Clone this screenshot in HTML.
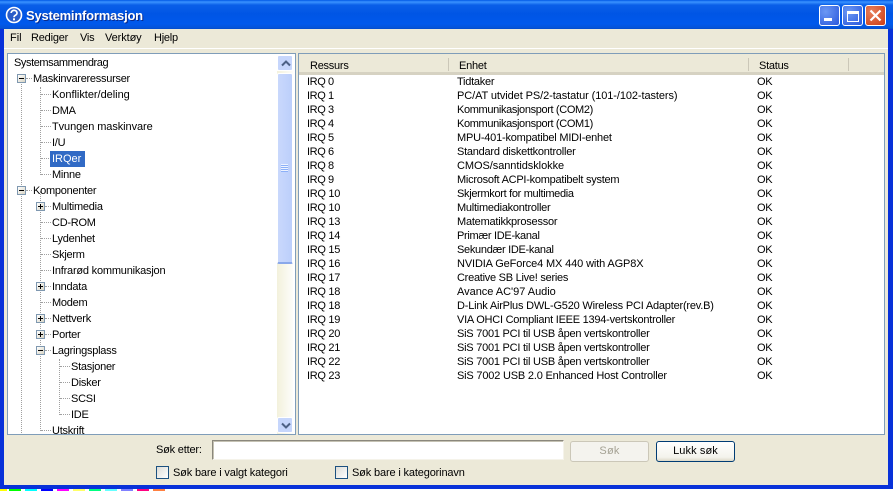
<!DOCTYPE html>
<html><head><meta charset="utf-8"><style>
html,body{margin:0;padding:0;width:893px;height:491px;overflow:hidden;background:#fff}
*{box-sizing:border-box}
#w{position:absolute;left:0;top:0;width:893px;height:491px;overflow:hidden;font:11px "Liberation Sans",sans-serif;color:#000;letter-spacing:-.25px}
.a{position:absolute;white-space:nowrap}
.t{position:absolute;white-space:nowrap;line-height:14px;height:14px}
.ln{position:absolute;border-color:#a0a0a0;border-style:dotted;border-width:0}
.pm{position:absolute;width:9px;height:9px;border:1px solid #7f98b0;background:linear-gradient(135deg,#fff,#d8d4c4)}
.pm:before{content:"";position:absolute;left:1px;top:3px;width:5px;height:1px;background:#000}
.pm.p:after{content:"";position:absolute;left:3px;top:1px;width:1px;height:5px;background:#000}
.c{position:absolute;top:489px;width:12px;height:2px}
</style></head><body><div id="w">
<div class="a" style="left:0;top:0;width:893px;height:30px;background:linear-gradient(180deg,#0058e6 0,#3a93ff 2px,#0a5fe8 5px,#0055e5 14px,#0059ec 24px,#0453d8 28px,#003fb8 30px)"></div>
<div class="a" style="left:0;top:29px;width:893px;height:460px;background:#ece9d8;border-left:4px solid #0831d9;border-right:5px solid #0831d9;border-bottom:4px solid #0831d9"></div>
<svg class="a" style="left:5px;top:6px" width="18" height="18" viewBox="0 0 18 18"><circle cx="9" cy="9" r="7.5" fill="#2a5cc8" stroke="#fff" stroke-width="1.6"/><path d="M6.2 7a2.9 2.6 0 1 1 4.3 2.2c-1 .6-1.5 1-1.5 2.1" fill="none" stroke="#fff" stroke-width="1.7"/><rect x="8" y="12.3" width="2" height="2" fill="#fff"/></svg>
<div class="a" style="left:26px;top:8px;font:bold 13px/16px 'Liberation Sans',sans-serif;color:#fff;text-shadow:1px 1px 0 #0a2a8a;letter-spacing:-.22px">Systeminformasjon</div>
<div class="a" style="left:819px;top:5px;width:21px;height:21px;border:1px solid #fff;border-radius:3px;background:radial-gradient(circle at 30% 30%,#6c98f4,#2a58dc)"><div class="a" style="left:4px;top:12px;width:8px;height:3px;background:#fff"></div></div>
<div class="a" style="left:842px;top:5px;width:21px;height:21px;border:1px solid #fff;border-radius:3px;background:radial-gradient(circle at 30% 30%,#6c98f4,#2a58dc)"><div class="a" style="left:4px;top:5px;width:12px;height:11px;border:1px solid #fff;border-top-width:3px"></div></div>
<div class="a" style="left:865px;top:5px;width:21px;height:21px;border:1px solid #fff;border-radius:3px;background:radial-gradient(circle at 30% 30%,#e8805c,#cc3c14)"><svg class="a" style="left:3px;top:3px" width="13" height="13"><path d="M1.5 1.5L11.5 11.5M11.5 1.5L1.5 11.5" stroke="#fff" stroke-width="2.2"/></svg></div>
<div class="t" style="left:10px;top:31px;letter-spacing:0">Fil</div><div class="t" style="left:31px;top:31px;letter-spacing:-.2px">Rediger</div><div class="t" style="left:80px;top:31px">Vis</div><div class="t" style="left:105px;top:31px;letter-spacing:-.1px">Verktøy</div><div class="t" style="left:154px;top:31px">Hjelp</div>
<div class="a" style="left:4px;top:48px;width:884px;height:1px;background:#fff"></div>

<div class="a" style="left:7px;top:53px;width:289px;height:382px;background:#fff;border:1px solid #7f9db9;overflow:hidden" id="tree">
<div class="ln" style="left:13px;top:25px;height:356px;border-left-width:1px"></div>
<div class="ln" style="left:32px;top:33px;height:88px;border-left-width:1px"></div>
<div class="ln" style="left:32px;top:137px;height:240px;border-left-width:1px"></div>
<div class="ln" style="left:51px;top:305px;height:56px;border-left-width:1px"></div>
<div class="ln" style="left:18px;top:24px;width:6px;border-top-width:1px"></div><div class="ln" style="left:18px;top:136px;width:6px;border-top-width:1px"></div>
<div class="ln" style="left:33px;top:40px;width:10px;border-top-width:1px"></div><div class="ln" style="left:33px;top:56px;width:10px;border-top-width:1px"></div><div class="ln" style="left:33px;top:72px;width:10px;border-top-width:1px"></div><div class="ln" style="left:33px;top:88px;width:10px;border-top-width:1px"></div><div class="ln" style="left:33px;top:104px;width:10px;border-top-width:1px"></div><div class="ln" style="left:33px;top:120px;width:10px;border-top-width:1px"></div>
<div class="ln" style="left:37px;top:152px;width:6px;border-top-width:1px"></div><div class="ln" style="left:33px;top:168px;width:10px;border-top-width:1px"></div><div class="ln" style="left:33px;top:184px;width:10px;border-top-width:1px"></div><div class="ln" style="left:33px;top:200px;width:10px;border-top-width:1px"></div><div class="ln" style="left:33px;top:216px;width:10px;border-top-width:1px"></div><div class="ln" style="left:37px;top:232px;width:6px;border-top-width:1px"></div><div class="ln" style="left:33px;top:248px;width:10px;border-top-width:1px"></div><div class="ln" style="left:37px;top:264px;width:6px;border-top-width:1px"></div><div class="ln" style="left:37px;top:280px;width:6px;border-top-width:1px"></div><div class="ln" style="left:37px;top:296px;width:6px;border-top-width:1px"></div><div class="ln" style="left:33px;top:376px;width:10px;border-top-width:1px"></div>
<div class="ln" style="left:52px;top:312px;width:10px;border-top-width:1px"></div><div class="ln" style="left:52px;top:328px;width:10px;border-top-width:1px"></div><div class="ln" style="left:52px;top:344px;width:10px;border-top-width:1px"></div><div class="ln" style="left:52px;top:360px;width:10px;border-top-width:1px"></div>
<div class="pm" style="left:9px;top:20px"></div><div class="pm" style="left:9px;top:132px"></div>
<div class="pm p" style="left:28px;top:148px"></div><div class="pm p" style="left:28px;top:228px"></div><div class="pm p" style="left:28px;top:260px"></div><div class="pm p" style="left:28px;top:276px"></div><div class="pm" style="left:28px;top:292px"></div>
<div class="a" style="left:42px;top:97px;width:35px;height:16px;background:#316ac5"></div>
<div class="t" style="left:6px;top:2px;letter-spacing:-.42px">Systemsammendrag</div>
<div class="t" style="left:25px;top:18px;letter-spacing:-.27px">Maskinvareressurser</div>
<div class="t" style="left:44px;top:34px;letter-spacing:-.03px">Konflikter/deling</div>
<div class="t" style="left:44px;top:50px">DMA</div>
<div class="t" style="left:44px;top:66px;letter-spacing:-.08px">Tvungen maskinvare</div>
<div class="t" style="left:44px;top:82px">I/U</div>
<div class="t" style="left:44px;top:98px;color:#fff;letter-spacing:0">IRQer</div>
<div class="t" style="left:44px;top:114px">Minne</div>
<div class="t" style="left:25px;top:130px">Komponenter</div>
<div class="t" style="left:44px;top:146px">Multimedia</div>
<div class="t" style="left:44px;top:162px">CD-ROM</div>
<div class="t" style="left:44px;top:178px">Lydenhet</div>
<div class="t" style="left:44px;top:194px">Skjerm</div>
<div class="t" style="left:44px;top:210px;letter-spacing:-.21px">Infrarød kommunikasjon</div>
<div class="t" style="left:44px;top:226px">Inndata</div>
<div class="t" style="left:44px;top:242px">Modem</div>
<div class="t" style="left:44px;top:258px">Nettverk</div>
<div class="t" style="left:44px;top:274px">Porter</div>
<div class="t" style="left:44px;top:290px">Lagringsplass</div>
<div class="t" style="left:63px;top:306px">Stasjoner</div>
<div class="t" style="left:63px;top:322px">Disker</div>
<div class="t" style="left:63px;top:338px">SCSI</div>
<div class="t" style="left:63px;top:354px">IDE</div>
<div class="t" style="left:44px;top:370px">Utskrift</div>
<div class="a" style="left:269px;top:0;width:19px;height:380px;background:#fff"></div>
<div class="a" style="left:269px;top:17px;width:16px;height:363px;background:linear-gradient(90deg,#f3f1dc,#fdfdfa)"></div>
<div class="a" style="left:269px;top:1px;width:16px;height:16px;background:#c6d6fc;border:1px solid #fff;border-radius:2px"><svg class="a" style="left:3px;top:4px" width="10" height="7"><path d="M1 5.5L5 1.5L9 5.5" fill="none" stroke="#4d6185" stroke-width="2"/></svg></div>
<div class="a" style="left:269px;top:19px;width:16px;height:191px;background:linear-gradient(90deg,#c9d8fc,#bccffb);border:1px solid #fff;border-bottom:2px solid #8aa8ea;border-radius:2px"><div class="a" style="left:3px;top:90px;width:7px;height:8px;background:repeating-linear-gradient(180deg,#eef3ff 0 1px,#8cb0f8 1px 2px)"></div></div>
<div class="a" style="left:269px;top:363px;width:16px;height:16px;background:#c6d6fc;border:1px solid #fff;border-radius:2px"><svg class="a" style="left:3px;top:4px" width="10" height="7"><path d="M1 1.5L5 5.5L9 1.5" fill="none" stroke="#4d6185" stroke-width="2"/></svg></div>
</div>

<div class="a" style="left:298px;top:53px;width:587px;height:382px;background:#fff;border:1px solid #7f9db9;overflow:hidden">
<div class="a" style="left:0;top:0;width:585px;height:21px;background:#ece9d8;border-bottom:3px solid #d6d2c2"></div>
<div class="a" style="left:149px;top:4px;width:1px;height:13px;background:#cbc7b8"></div>
<div class="a" style="left:449px;top:4px;width:1px;height:13px;background:#cbc7b8"></div>
<div class="a" style="left:549px;top:4px;width:1px;height:13px;background:#cbc7b8"></div>
<div class="t" style="left:11px;top:5px">Ressurs</div><div class="t" style="left:160px;top:5px">Enhet</div><div class="t" style="left:460px;top:5px">Status</div>
<div class="t" style="left:8px;top:21px;letter-spacing:-.4px">IRQ 0</div><div class="t" style="left:158px;top:21px">Tidtaker</div><div class="t" style="left:458px;top:21px">OK</div>
<div class="t" style="left:8px;top:35px;letter-spacing:-.4px">IRQ 1</div><div class="t" style="left:158px;top:35px;letter-spacing:-.09px">PC/AT utvidet PS/2-tastatur (101-/102-tasters)</div><div class="t" style="left:458px;top:35px">OK</div>
<div class="t" style="left:8px;top:49px;letter-spacing:-.4px">IRQ 3</div><div class="t" style="left:158px;top:49px;letter-spacing:-.36px">Kommunikasjonsport (COM2)</div><div class="t" style="left:458px;top:49px">OK</div>
<div class="t" style="left:8px;top:63px;letter-spacing:-.4px">IRQ 4</div><div class="t" style="left:158px;top:63px;letter-spacing:-.36px">Kommunikasjonsport (COM1)</div><div class="t" style="left:458px;top:63px">OK</div>
<div class="t" style="left:8px;top:77px;letter-spacing:-.4px">IRQ 5</div><div class="t" style="left:158px;top:77px;letter-spacing:-.21px">MPU-401-kompatibel MIDI-enhet</div><div class="t" style="left:458px;top:77px">OK</div>
<div class="t" style="left:8px;top:91px;letter-spacing:-.4px">IRQ 6</div><div class="t" style="left:158px;top:91px;letter-spacing:-.24px">Standard diskettkontroller</div><div class="t" style="left:458px;top:91px">OK</div>
<div class="t" style="left:8px;top:105px;letter-spacing:-.4px">IRQ 8</div><div class="t" style="left:158px;top:105px;letter-spacing:-.06px">CMOS/sanntidsklokke</div><div class="t" style="left:458px;top:105px">OK</div>
<div class="t" style="left:8px;top:119px;letter-spacing:-.4px">IRQ 9</div><div class="t" style="left:158px;top:119px">Microsoft ACPI-kompatibelt system</div><div class="t" style="left:458px;top:119px">OK</div>
<div class="t" style="left:8px;top:133px;letter-spacing:-.3px">IRQ 10</div><div class="t" style="left:158px;top:133px;letter-spacing:-.32px">Skjermkort for multimedia</div><div class="t" style="left:458px;top:133px">OK</div>
<div class="t" style="left:8px;top:147px;letter-spacing:-.3px">IRQ 10</div><div class="t" style="left:158px;top:147px">Multimediakontroller</div><div class="t" style="left:458px;top:147px">OK</div>
<div class="t" style="left:8px;top:161px;letter-spacing:-.3px">IRQ 13</div><div class="t" style="left:158px;top:161px;letter-spacing:-.22px">Matematikkprosessor</div><div class="t" style="left:458px;top:161px">OK</div>
<div class="t" style="left:8px;top:175px;letter-spacing:-.3px">IRQ 14</div><div class="t" style="left:158px;top:175px;letter-spacing:-.3px">Primær IDE-kanal</div><div class="t" style="left:458px;top:175px">OK</div>
<div class="t" style="left:8px;top:189px;letter-spacing:-.3px">IRQ 15</div><div class="t" style="left:158px;top:189px;letter-spacing:-.3px">Sekundær IDE-kanal</div><div class="t" style="left:458px;top:189px">OK</div>
<div class="t" style="left:8px;top:203px;letter-spacing:-.3px">IRQ 16</div><div class="t" style="left:158px;top:203px;letter-spacing:-.13px">NVIDIA GeForce4 MX 440 with AGP8X</div><div class="t" style="left:458px;top:203px">OK</div>
<div class="t" style="left:8px;top:217px;letter-spacing:-.3px">IRQ 17</div><div class="t" style="left:158px;top:217px;letter-spacing:-.26px">Creative SB Live! series</div><div class="t" style="left:458px;top:217px">OK</div>
<div class="t" style="left:8px;top:231px;letter-spacing:-.3px">IRQ 18</div><div class="t" style="left:158px;top:231px;letter-spacing:-.02px">Avance AC'97 Audio</div><div class="t" style="left:458px;top:231px">OK</div>
<div class="t" style="left:8px;top:245px;letter-spacing:-.3px">IRQ 18</div><div class="t" style="left:158px;top:245px;letter-spacing:-.2px">D-Link AirPlus DWL-G520 Wireless PCI Adapter(rev.B)</div><div class="t" style="left:458px;top:245px">OK</div>
<div class="t" style="left:8px;top:259px;letter-spacing:-.3px">IRQ 19</div><div class="t" style="left:158px;top:259px;letter-spacing:-.24px">VIA OHCI Compliant IEEE 1394-vertskontroller</div><div class="t" style="left:458px;top:259px">OK</div>
<div class="t" style="left:8px;top:273px;letter-spacing:-.3px">IRQ 20</div><div class="t" style="left:158px;top:273px;letter-spacing:-.24px">SiS 7001 PCI til USB åpen vertskontroller</div><div class="t" style="left:458px;top:273px">OK</div>
<div class="t" style="left:8px;top:287px;letter-spacing:-.3px">IRQ 21</div><div class="t" style="left:158px;top:287px;letter-spacing:-.24px">SiS 7001 PCI til USB åpen vertskontroller</div><div class="t" style="left:458px;top:287px">OK</div>
<div class="t" style="left:8px;top:301px;letter-spacing:-.3px">IRQ 22</div><div class="t" style="left:158px;top:301px;letter-spacing:-.24px">SiS 7001 PCI til USB åpen vertskontroller</div><div class="t" style="left:458px;top:301px">OK</div>
<div class="t" style="left:8px;top:315px;letter-spacing:-.3px">IRQ 23</div><div class="t" style="left:158px;top:315px;letter-spacing:-.19px">SiS 7002 USB 2.0 Enhanced Host Controller</div><div class="t" style="left:458px;top:315px">OK</div>
</div>

<div class="t" style="left:156px;top:443px;letter-spacing:-.2px">Søk etter:</div>
<div class="a" style="left:212px;top:440px;width:352px;height:20px;background:#fff;border:1px solid;border-color:#8a877c #f5f3ea #f5f3ea #8a877c;box-shadow:inset 1px 1px 0 #c5c2b3"></div>
<div class="a" style="left:570px;top:441px;width:79px;height:21px;background:#f4f3ee;border:1px solid #cbc7b8;border-radius:3px;color:#a5a294;text-align:center;line-height:19px;letter-spacing:.2px">Søk</div>
<div class="a" style="left:656px;top:441px;width:79px;height:21px;background:linear-gradient(180deg,#fff,#f4f3ec 80%,#dcd8c8);border:1px solid #003c74;border-radius:3px;text-align:center;line-height:19px;letter-spacing:.1px">Lukk søk</div>
<div class="a" style="left:156px;top:466px;width:13px;height:13px;background:linear-gradient(135deg,#dcdcd7,#fff);border:1px solid #1c5180"></div>
<div class="t" style="left:173px;top:466px;letter-spacing:-.16px">Søk bare i valgt kategori</div>
<div class="a" style="left:335px;top:466px;width:13px;height:13px;background:linear-gradient(135deg,#dcdcd7,#fff);border:1px solid #1c5180"></div>
<div class="t" style="left:352px;top:466px;letter-spacing:-.15px">Søk bare i kategorinavn</div>

<div class="c" style="left:0;width:7px;background:#ffff00"></div>
<div class="c" style="left:9px;background:#00ff00"></div>
<div class="c" style="left:25px;background:#00ffff"></div>
<div class="c" style="left:41px;background:#0000ff"></div>
<div class="c" style="left:57px;background:#ff00ff"></div>
<div class="c" style="left:73px;background:#ffff66"></div>
<div class="c" style="left:89px;background:#00ff80"></div>
<div class="c" style="left:105px;background:#66ffff"></div>
<div class="c" style="left:121px;background:#8080ff"></div>
<div class="c" style="left:137px;background:#ff0080"></div>
<div class="c" style="left:153px;background:#ff8040"></div>
</div></body></html>
